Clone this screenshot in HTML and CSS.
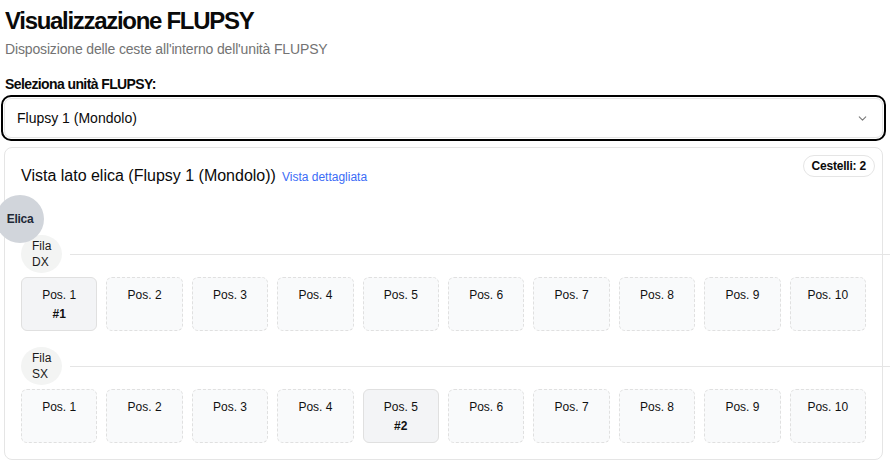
FILE: index.html
```html
<!DOCTYPE html>
<html lang="it">
<head>
<meta charset="utf-8">
<title>Visualizzazione FLUPSY</title>
<link rel="stylesheet" href="styles.css">
</head>
<body>
<main class="page">
  <h1 class="title">Visualizzazione FLUPSY</h1>
  <p class="subtitle">Disposizione delle ceste all'interno dell'unità FLUPSY</p>

  <label class="field-label">Seleziona unità FLUPSY:</label>
  <div class="select">
    <span>Flupsy 1 (Mondolo)</span>
    <svg class="chev" width="13" height="13" viewBox="0 0 24 24" fill="none" stroke="currentColor" stroke-width="2" stroke-linecap="round" stroke-linejoin="round"><path d="m6 9 6 6 6-6"/></svg>
  </div>

  <section class="card">
    <div class="card-head">
      <h2 class="card-title">Vista lato elica (Flupsy 1 (Mondolo))</h2>
      <a class="card-link" href="#">Vista dettagliata</a>
    </div>
    <span class="badge">Cestelli: 2</span>
    <div class="elica">Elica</div>

    <div class="rows">
      <div class="row">
        <div class="row-head">
          <div class="row-label">Fila<br>DX</div>
          <div class="row-line"></div>
        </div>
        <div class="slots">
          <div class="slot filled"><span>Pos. 1</span><b>#1</b></div>
          <div class="slot"><span>Pos. 2</span></div>
          <div class="slot"><span>Pos. 3</span></div>
          <div class="slot"><span>Pos. 4</span></div>
          <div class="slot"><span>Pos. 5</span></div>
          <div class="slot"><span>Pos. 6</span></div>
          <div class="slot"><span>Pos. 7</span></div>
          <div class="slot"><span>Pos. 8</span></div>
          <div class="slot"><span>Pos. 9</span></div>
          <div class="slot"><span>Pos. 10</span></div>
        </div>
      </div>

      <div class="row">
        <div class="row-head">
          <div class="row-label">Fila<br>SX</div>
          <div class="row-line"></div>
        </div>
        <div class="slots">
          <div class="slot"><span>Pos. 1</span></div>
          <div class="slot"><span>Pos. 2</span></div>
          <div class="slot"><span>Pos. 3</span></div>
          <div class="slot"><span>Pos. 4</span></div>
          <div class="slot filled"><span>Pos. 5</span><b>#2</b></div>
          <div class="slot"><span>Pos. 6</span></div>
          <div class="slot"><span>Pos. 7</span></div>
          <div class="slot"><span>Pos. 8</span></div>
          <div class="slot"><span>Pos. 9</span></div>
          <div class="slot"><span>Pos. 10</span></div>
        </div>
      </div>
    </div>
  </section>
</main>
</body>
</html>
```

FILE: styles.css
```css
* { box-sizing: border-box; }
html, body { margin: 0; padding: 0; background: #fff; }
body {
  font-family: "Segoe UI", "Liberation Sans", Arial, sans-serif;
  color: #0a0a0a;
  overflow: hidden;
}
.page {
  padding: 5px 7px 0 4px;
  display: flex;
  flex-direction: column;
}
.title {
  margin: 0;
  font-size: 24px;
  line-height: 32px;
  font-weight: 700;
  letter-spacing: -1.3px;
  padding-left: 1px;
}
.subtitle {
  margin: 2px 0 0;
  font-size: 14px;
  line-height: 20px;
  color: #737373;
  letter-spacing: -0.15px;
  padding-left: 1px;
}
.field-label {
  margin-top: 15px;
  font-size: 14px;
  line-height: 20px;
  font-weight: 700;
  letter-spacing: -0.6px;
  padding-left: 1px;
}
.select {
  margin-top: 4px;
  height: 40px;
  border: 1px solid #e5e5e5;
  border-radius: 7px;
  outline: 2px solid #000;
  outline-offset: 1px;
  display: flex;
  align-items: center;
  justify-content: space-between;
  padding: 0 13px 0 12px;
  font-size: 14px;
}
.chev { color: #7a7a7a; }
.card {
  position: relative;
  margin-top: 9px;
  border: 1px solid #e5e5e5;
  border-radius: 8px;
  padding: 16px 16px 16px;
}
.card-head {
  display: flex;
  align-items: baseline;
  gap: 6px;
}
.card-title {
  margin: 0;
  font-size: 16px;
  line-height: 24px;
  font-weight: 400;
}
.card-link {
  font-size: 12px;
  color: #3b6cf6;
  text-decoration: none;
}
.badge {
  position: absolute;
  top: 7px;
  right: 7px;
  height: 22px;
  padding: 0 8px;
  display: flex;
  align-items: center;
  border: 1px solid #e5e5e5;
  border-radius: 999px;
  font-size: 12px;
  font-weight: 700;
  letter-spacing: -0.2px;
}
.elica {
  position: absolute;
  left: -9px;
  top: 47px;
  width: 48px;
  height: 48px;
  border-radius: 50%;
  background: #d1d5db;
  display: flex;
  align-items: center;
  justify-content: center;
  font-size: 12px;
  font-weight: 700;
  letter-spacing: -0.3px;
  color: #1f2937;
}
.rows {
  margin-top: 47px;
  display: flex;
  flex-direction: column;
  gap: 16px;
}
.row-head {
  display: flex;
  align-items: center;
  gap: 8px;
  margin-right: -30px;
}
.row-label {
  width: 41px;
  height: 38px;
  border-radius: 50%;
  background: #f3f4f3;
  font-size: 12px;
  line-height: 16px;
  font-weight: 500;
  padding: 3px 0 0 11px;
  color: #1a1a1a;
}
.row-line {
  flex: 1;
  height: 1px;
  background: #e5e5e5;
}
.slots {
  margin-top: 4px;
  display: grid;
  grid-template-columns: repeat(10, 1fr);
  gap: 9px;
}
.slot {
  height: 54px;
  border: 1px dashed #e0e0e0;
  border-radius: 6px;
  background: #f9fafb;
  padding-top: 8px;
  display: flex;
  flex-direction: column;
  align-items: center;
  font-size: 12px;
  color: #111;
}
.slot span { line-height: 18px; }
.slot b { line-height: 20px; font-weight: 600; }
.slot.filled {
  border-style: solid;
  background: #f3f4f6;
}
```
